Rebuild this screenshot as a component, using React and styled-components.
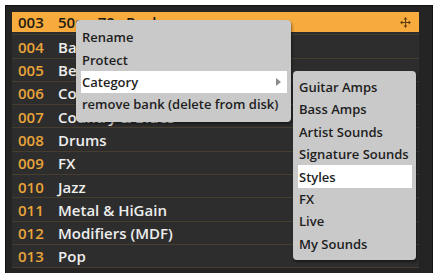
import styled, { createGlobalStyle } from 'styled-components'

const Global = createGlobalStyle`
  html, body {
    margin: 0;
    background: #fff;
  }
  body {
    font-family: "Open Sans", "DejaVu Sans", sans-serif;
    overflow: hidden;
  }
`

const Frame = styled.div`
  position: relative;
  margin: 5px 0 0 5px;
  width: 428px;
  height: 280px;
  box-sizing: border-box;
  padding: 6px 13px 0 6px;
  background: #242424;
  border: 1px solid #121212;
`

const List = styled.div`
  display: flex;
  flex-direction: column;
  background: #2d2d2d;
`

const Row = styled.div`
  height: 23.3px;
  box-sizing: border-box;
  padding-top: ${p => (p.$hl ? 0 : 1.5)}px;
  border-bottom: 1px solid #453e2f;
`

const Band = styled.div`
  height: 20px;
  display: flex;
  align-items: center;
  padding-left: 6px;
  background: ${p => (p.$hl ? '#f7ab3c' : 'transparent')};
  font-size: 15px;
  font-weight: 600;
  white-space: nowrap;
`

const Num = styled.span`
  width: 40px;
  flex: none;
  color: ${p => (p.$hl ? '#1f1a12' : '#e9a43a')};
`

const Name = styled.span`
  flex: 1;
  color: ${p => (p.$hl ? '#1f1a12' : '#ededed')};
`

const Move = styled.svg`
  flex: none;
  margin-right: 8px;
`

const Menu = styled.div`
  position: absolute;
  left: 70px;
  top: 14px;
  width: ${p => p.$w}px;
  box-sizing: border-box;
  padding: 6px 4px 6px 5px;
  background: #c9c9c9;
  border-radius: 4px;
  box-shadow: 1px 2px 3px rgba(0, 0, 0, 0.45);
  font-size: 13px;
  font-weight: 600;
  color: #1e1e1e;
`

const SubMenu = styled(Menu)`
  left: calc(100% + 6px);
  top: 0;
  padding: 5px 4px 5px 5px;
`

const Item = styled.div`
  position: relative;
  height: 22.4px;
  display: flex;
  align-items: center;
  padding: 0 6px 0 1px;
  white-space: nowrap;
  background: ${p => (p.$active ? '#fff' : 'transparent')};
`

const Arrow = styled.span`
  margin-left: auto;
  width: 0;
  height: 0;
  border-left: 5px solid #8a8a8a;
  border-top: 4px solid transparent;
  border-bottom: 4px solid transparent;
`

const banks = [
  ['003', '50s – 70s Rock'],
  ['004', 'Bass'],
  ['005', 'Best Of'],
  ['006', 'Cool Cleans'],
  ['007', 'Country & Blues'],
  ['008', 'Drums'],
  ['009', 'FX'],
  ['010', 'Jazz'],
  ['011', 'Metal & HiGain'],
  ['012', 'Modifiers (MDF)'],
  ['013', 'Pop'],
]

const categories = [
  'Guitar Amps',
  'Bass Amps',
  'Artist Sounds',
  'Signature Sounds',
  'Styles',
  'FX',
  'Live',
  'My Sounds',
]

function MoveIcon() {
  return (
    <Move width="11" height="11" viewBox="0 0 11 11">
      <g fill="#5e3b0c" stroke="#5e3b0c" strokeWidth="1">
        <path d="M5.5 2v7M2 5.5h7" fill="none" />
        <polygon points="5.5,0 3.6,2.4 7.4,2.4" stroke="none" />
        <polygon points="5.5,11 3.6,8.6 7.4,8.6" stroke="none" />
        <polygon points="0,5.5 2.4,3.6 2.4,7.4" stroke="none" />
        <polygon points="11,5.5 8.6,3.6 8.6,7.4" stroke="none" />
      </g>
    </Move>
  )
}

export default function App() {
  return (
    <>
      <Global />
      <Frame>
        <List>
          {banks.map(([n, name], i) => (
            <Row key={n} $hl={i === 0}>
              <Band $hl={i === 0}>
                <Num $hl={i === 0}>{n}</Num>
                <Name $hl={i === 0}>{name}</Name>
                {i === 0 && <MoveIcon />}
              </Band>
            </Row>
          ))}
        </List>
        <Menu $w={215}>
          <Item>Rename</Item>
          <Item>Protect</Item>
          <Item $active>
            Category
            <Arrow />
            <SubMenu $w={123}>
              {categories.map(c => (
                <Item key={c} $active={c === 'Styles'}>{c}</Item>
              ))}
            </SubMenu>
          </Item>
          <Item>remove bank (delete from disk)</Item>
        </Menu>
      </Frame>
    </>
  )
}
